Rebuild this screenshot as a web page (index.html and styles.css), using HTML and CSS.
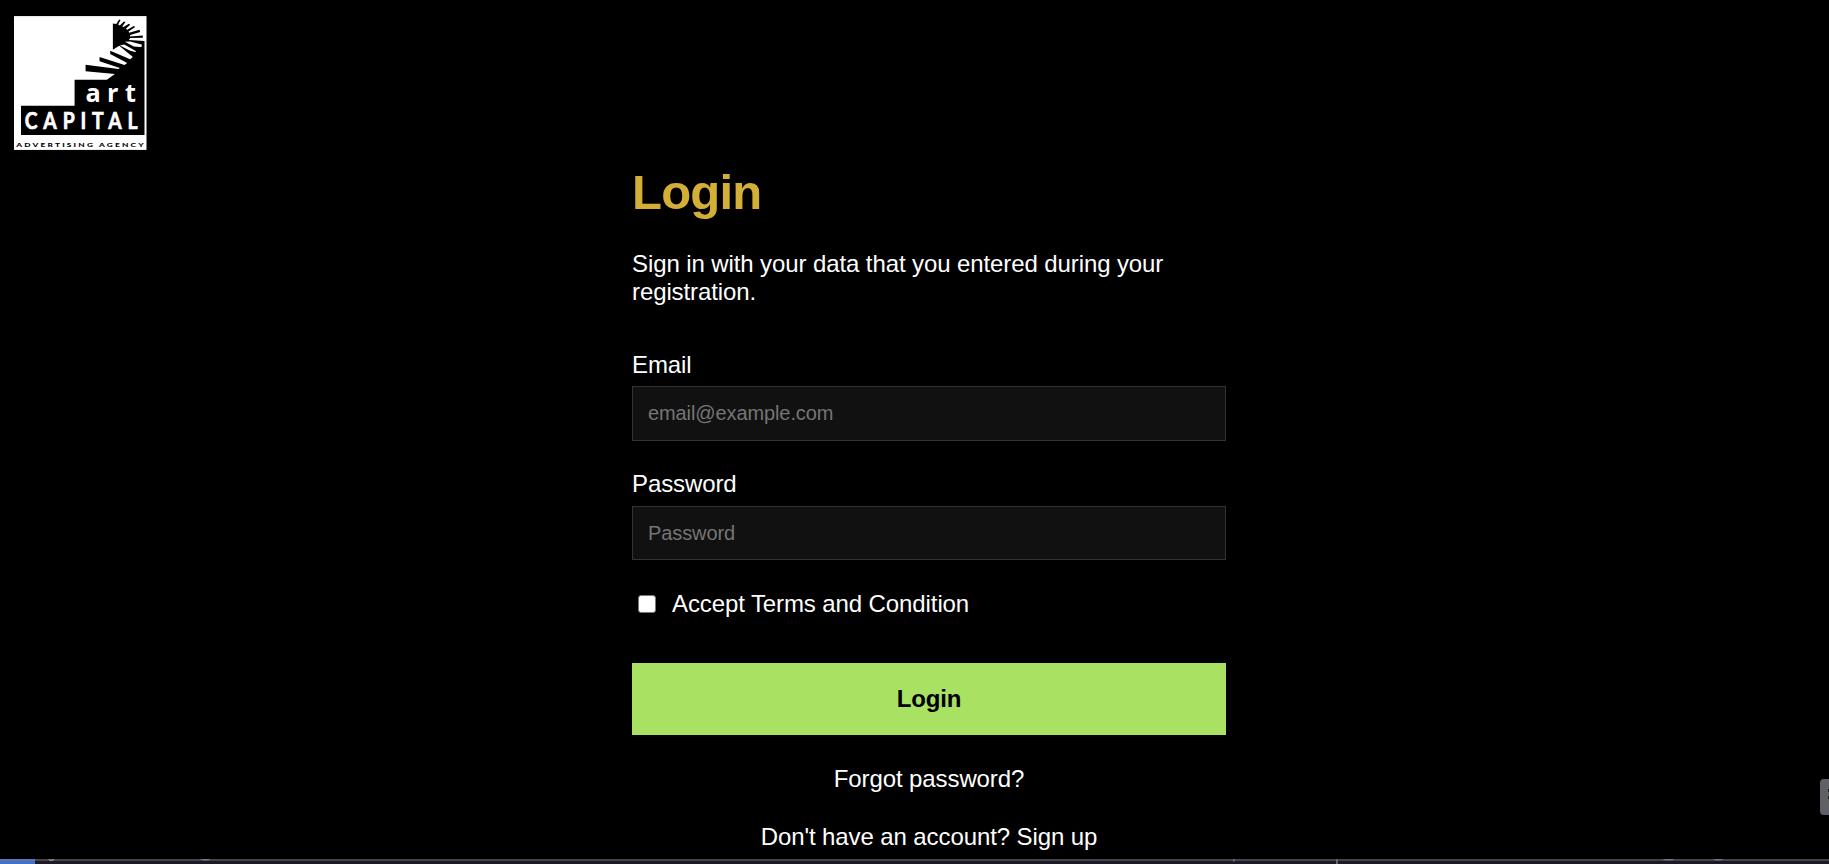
FILE: index.html
```html
<!DOCTYPE html>
<html lang="en">
<head>
<meta charset="utf-8">
<title>Login</title>
<link rel="stylesheet" href="styles.css">
</head>
<body>
<div class="page">
  <header class="header">
    <svg class="logo" viewBox="41 46 398 402" role="img" aria-label="Art Capital Advertising Agency">
      <rect x="41" y="46" width="398" height="402" fill="#fff"/>
      <path d="M62 403V315H223V237H320L344 220L256 212V192L355 205L359 202L298 182V169L373 193L381 187L330 160V150L390 176L398 169L357 135L338 147V68L348 70L357 56L361 58L354 71L359 74L371 62L376 64L366 77L370 79L386 69L390 72L377 84L381 87L401 76L405 79L385 92L387 96L418 87L420 94L390 103V107L428 104V111L390 112L386 118L433 121V403Z"/>
      <path d="M359 134L372 131L403 149Q411 155 405 154L390 150ZM374 123L390 122L424 131Q428 137 420 139L401 137Z" fill="#fff"/>
      <g class="logo-text">
        <text class="logo-art" x="256" y="305" textLength="170" lengthAdjust="spacingAndGlyphs">art</text>
        <text class="logo-capital" x="73" y="385" textLength="357" lengthAdjust="spacingAndGlyphs">CAPITAL</text>
        <text class="logo-tagline" x="48" y="440" textLength="389" lengthAdjust="spacingAndGlyphs">ADVERTISING AGENCY</text>
      </g>
    </svg>
  </header>
  <main class="login">
    <h1 class="title">Login</h1>
    <p class="intro">Sign in with your data that you entered during your registration.</p>
    <form class="form">
      <label class="label" for="email">Email</label>
      <input class="field field-email" id="email" type="email" placeholder="email@example.com">
      <label class="label label-password" for="password">Password</label>
      <input class="field" id="password" type="password" placeholder="Password">
      <label class="terms"><input class="check" type="checkbox"><span>Accept Terms and Condition</span></label>
      <button class="submit" type="button">Login</button>
    </form>
    <a class="link" href="#">Forgot password?</a>
    <a class="link" href="#">Don't have an account? Sign up</a>
  </main>
  <div class="side-tab"><span class="dot"></span><span class="dot"></span></div>
  <footer class="strip">
    <svg class="strip-art" viewBox="0 0 1829 5">
      <path d="M0 0H35V5H0Z" fill="#466fc5"/>
      <path d="M0 0H35V2H0Z" fill="#5b76b4"/>
      <path d="M49 0Q51 3 54 0" fill="none" stroke="#8a8e92" stroke-width="1.4"/>
      <path d="M200 0H211Q205 3 200 0ZM1662 0H1675Q1669 3 1662 0ZM1713 0H1724Q1718 3 1713 0Z" fill="#777a86"/>
      <path d="M1233 0H1235V2L1233 3Z" fill="#5e6c7a"/>
      <path d="M1336 0H1337V5H1336Z" fill="#5a7086"/>
      <path d="M1337 0H1338V5H1337Z" fill="#6e5a50"/>
    </svg>
  </footer>
</div>
</body>
</html>
```
FILE: styles.css
```css
* { box-sizing: border-box; }
body {
  margin: 0;
  background: #000;
  color: #fff;
  font: 24px/28px "Liberation Sans", Arial, sans-serif;
  letter-spacing: -0.1px;
}
.page {
  position: relative;
  display: flex;
  flex-direction: column;
  height: 864px;
  overflow: hidden;
}
.header { height: 149px; padding: 15.5px 0 0 13.7px; }
.logo { display: block; width: 132.5px; height: 134px; letter-spacing: 0; overflow: visible; }
.logo-text { font-family: Lato, "Open Sans", sans-serif; fill: #fff; }
.logo-art { font-family: "Open Sans", sans-serif; font-size: 76px; font-weight: 700; letter-spacing: 19px; }
.logo-capital { font-size: 69px; font-weight: 700; letter-spacing: 21px; stroke: #fff; stroke-width: 2px; }
.logo-tagline { font-size: 19px; font-weight: 900; letter-spacing: 5px; fill: #000; }
.login {
  display: flex;
  flex-direction: column;
  width: 594px;
  margin-left: 632px;
}
.title { margin: 16px 0 0; color: #d4af37; font-size: 49px; line-height: 54px; letter-spacing: -0.8px; }
.intro { margin: 31px 0 45px; }
.form { display: flex; flex-direction: column; }
.label { margin-bottom: 7px; }
.label-password { margin-bottom: 8px; }
.field {
  height: 54px;
  margin: 0 0 31px;
  padding: 0 15px;
  border: 1px solid #333;
  border-radius: 0;
  background: #111;
  color: #fff;
  font: 20px "Liberation Sans", Arial, sans-serif;
  letter-spacing: -0.1px;
}
.field-email { height: 55px; margin-bottom: 29px; }
.field::placeholder { color: #757575; }
.terms { display: flex; align-items: center; gap: 16px; margin: -1px 0 45px; }
.check {
  appearance: none;
  width: 18px;
  height: 18px;
  margin: 0 0 0 6px;
  border: 1px solid #767676;
  border-radius: 3px;
  background: #fff;
}
.submit {
  height: 72px;
  margin-bottom: 30px;
  padding: 0;
  border: 0;
  background: #a9e163;
  color: #000;
  font: bold 24px "Liberation Sans", Arial, sans-serif;
  letter-spacing: -0.2px;
}
.link { margin-bottom: 30px; color: #fff; text-align: center; text-decoration: none; }
.side-tab {
  position: absolute;
  top: 779px;
  right: 0;
  display: flex;
  flex-direction: column;
  align-items: flex-end;
  gap: 4px;
  width: 9px;
  height: 36px;
  padding-top: 10px;
  border-radius: 4px 0 0 4px;
  background: linear-gradient(#5f6165 80%, #605c6a);
}
.dot { width: 1px; height: 3px; background: #222; }
.strip {
  position: absolute;
  bottom: 0;
  left: 0;
  width: 100%;
  height: 5px;
  background: linear-gradient(#454547 2px, #1c1a26 2px);
}
.strip-art { display: block; width: 1829px; height: 5px; }
```
